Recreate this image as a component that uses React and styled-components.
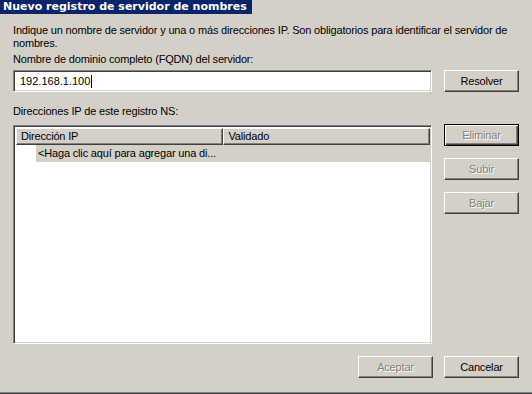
import React from "react";
import styled, { createGlobalStyle, css } from "styled-components";

const Global = createGlobalStyle`
  html, body { margin: 0; padding: 0; background: #d4d0c8; }
  body {
    font-family: "Liberation Sans", Arial, sans-serif;
    font-size: 11px;
    letter-spacing: -0.17px;
    color: #000;
  }
`;

const Window = styled.div`
  width: 532px;
  height: 394px;
  box-sizing: border-box;
  background: #d4d0c8;
  display: flex;
  flex-direction: column;
  border-bottom: 1px solid #404040;
  box-shadow: inset 0 -1px #808080;
`;

const TitleBar = styled.div`
  height: 14px;
  display: flex;
  align-items: stretch;
`;

const TitleText = styled.div`
  background: #0a246a;
  color: #fff;
  font-family: "DejaVu Sans", Verdana, sans-serif;
  font-weight: bold;
  font-size: 11px;
  letter-spacing: 0;
  line-height: 14px;
  padding: 0 5px 0 3px;
  white-space: nowrap;
`;

const Body = styled.div`
  flex: 1;
  display: flex;
  flex-direction: column;
  padding: 10px 13px 0 13px;
`;

const Text = styled.div`
  line-height: 13px;
  white-space: nowrap;
  margin-top: ${(p) => p.$mt || 0}px;
`;

const Row = styled.div`
  display: flex;
  align-items: flex-start;
  gap: 12px;
  margin-top: ${(p) => p.$mt || 0}px;
`;

const sunken = css`
  box-sizing: border-box;
  border: 1px solid;
  border-color: #808080 #ffffff #ffffff #808080;
  box-shadow: inset 1px 1px #404040, inset -1px -1px #d4d0c8;
  background: #fff;
`;

const TextField = styled.div`
  ${sunken};
  width: 419px;
  height: 22px;
  display: flex;
  align-items: center;
  padding-left: 6px;
  line-height: 13px;
  letter-spacing: 0;
`;

const Caret = styled.span`
  display: inline-block;
  width: 1px;
  height: 13px;
  background: #000;
  margin-left: 1px;
`;

const Button = styled.div`
  box-sizing: border-box;
  width: 75px;
  height: 22px;
  display: flex;
  align-items: center;
  justify-content: center;
  background: #d4d0c8;
  border: 1px solid;
  border-color: ${(p) => (p.$default ? "#000" : "#ffffff #404040 #404040 #ffffff")};
  box-shadow: ${(p) =>
    p.$default
      ? "inset 1px 1px #fff, inset -1px -1px #404040, inset -2px -2px #808080"
      : "inset -1px -1px #808080"};
  color: ${(p) => (p.$disabled ? "#808080" : "#000")};
  text-shadow: ${(p) => (p.$disabled ? "1px 1px #fff" : "none")};
  line-height: 13px;
`;

const ButtonColumn = styled.div`
  display: flex;
  flex-direction: column;
  gap: 12px;
`;

const ListView = styled.div`
  ${sunken};
  width: 419px;
  height: 219px;
  margin-top: 1px;
  display: flex;
  flex-direction: column;
  padding: 2px 1px 1px 2px;
`;

const Header = styled.div`
  display: flex;
  height: 17px;
`;

const HeaderCell = styled.div`
  box-sizing: border-box;
  width: ${(p) => p.$w}px;
  height: 17px;
  background: #d4d0c8;
  border: 1px solid;
  border-color: #ffffff #404040 #404040 #ffffff;
  box-shadow: inset -1px -1px #808080;
  padding-left: ${(p) => p.$pl}px;
  line-height: 15px;
  white-space: nowrap;
`;

const ListRow = styled.div`
  display: flex;
  height: 17px;
`;

const StateCell = styled.div`
  width: 20px;
  background: #fff;
`;

const SelectedCell = styled.div`
  flex: 1;
  background: #d4d0c8;
  padding-left: 2px;
  line-height: 17px;
  white-space: nowrap;
`;

const Footer = styled.div`
  display: flex;
  justify-content: flex-end;
  gap: 11px;
  margin-top: 12px;
`;

export default function App() {
  return (
    <>
      <Global />
      <Window>
        <TitleBar>
          <TitleText>Nuevo registro de servidor de nombres</TitleText>
        </TitleBar>
        <Body>
          <Text>
            Indique un nombre de servidor y una o más direcciones IP. Son obligatorios para identificar el servidor de
          </Text>
          <Text>nombres.</Text>
          <Text $mt={3}>Nombre de dominio completo (FQDN) del servidor:</Text>
          <Row $mt={4}>
            <TextField>
              192.168.1.100
              <Caret />
            </TextField>
            <Button>Resolver</Button>
          </Row>
          <Text $mt={13}>Direcciones IP de este registro NS:</Text>
          <Row $mt={6}>
            <ListView>
              <Header>
                <HeaderCell $w={207} $pl={4}>Dirección IP</HeaderCell>
                <HeaderCell $w={208} $pl={5}>Validado</HeaderCell>
              </Header>
              <ListRow>
                <StateCell />
                <SelectedCell>&lt;Haga clic aquí para agregar una di...</SelectedCell>
              </ListRow>
            </ListView>
            <ButtonColumn>
              <Button $default $disabled>Eliminar</Button>
              <Button $disabled>Subir</Button>
              <Button $disabled>Bajar</Button>
            </ButtonColumn>
          </Row>
          <Footer>
            <Button $disabled>Aceptar</Button>
            <Button>Cancelar</Button>
          </Footer>
        </Body>
      </Window>
    </>
  );
}
